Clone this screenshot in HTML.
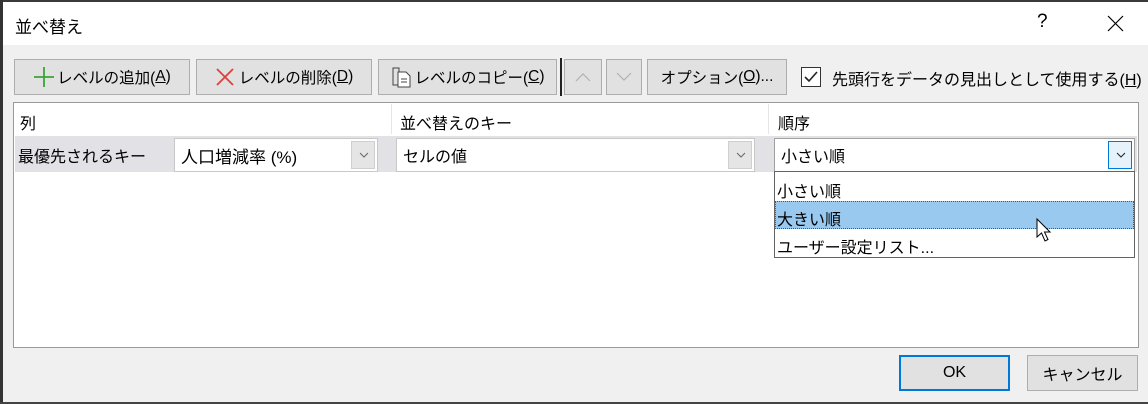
<!DOCTYPE html>
<html><head><meta charset="utf-8"><style>
*{margin:0;padding:0;box-sizing:border-box}
body{width:1148px;height:404px;overflow:hidden;background:#f0f0f0;position:relative;font-family:"Liberation Sans","Noto Sans CJK JP",sans-serif;font-size:15px;color:#000}
.a{position:absolute}
.btn{position:absolute;background:#e1e1e1;border:1px solid #adadad;display:flex;align-items:center;justify-content:center;white-space:nowrap;font-size:15.5px}
.cb{position:absolute;background:#fff;border:1px solid #c8c8c8;padding-left:6px;display:flex;align-items:center;font-size:16px}
.dd{position:absolute;top:2px;bottom:2px;right:2px;width:24px;background:#e5e5e5;border:1px solid #cfcfcf}
.dd svg{position:absolute;left:7px;top:10px}
u{text-decoration:underline}
</style></head><body>
<div class="a" style="left:0;top:0;width:1148px;height:2px;background:#3a3a3a"></div>
<div class="a" style="left:0;top:0;width:3px;height:404px;background:#333"></div>
<div class="a" style="left:0;top:402px;width:1148px;height:2px;background:#444"></div>
<div class="a" style="left:3px;top:2px;width:1145px;height:43px;background:#fff"></div>
<div class="a" style="left:15px;top:13px;font-size:17px">並べ替え</div>
<div class="a" style="left:1037px;top:11px;font-size:19px">?</div>
<svg class="a" style="left:1107px;top:15px" width="17" height="17"><path d="M1 1L16 16M16 1L1 16" stroke="#000" stroke-width="1.2"/></svg>

<div class="btn" style="left:14px;top:59px;width:176px;height:36px"><svg width="22" height="22" style="margin-right:2px"><path d="M11 1V21M1 11H21" stroke="#3aa53a" stroke-width="1.8"/></svg>レベルの追加(<u>A</u>)</div>
<div class="btn" style="left:196px;top:59px;width:176px;height:36px"><svg width="20" height="20" style="margin-right:4px"><path d="M2 2L18 18M18 2L2 18" stroke="#e0403a" stroke-width="1.8"/></svg>レベルの削除(<u>D</u>)</div>
<div class="btn" style="left:378px;top:59px;width:179px;height:36px"><svg width="22" height="22" style="margin-right:2px"><path d="M3 2H9V19H3Z" fill="none" stroke="#444"/><path d="M8 6H16L20 10V21H8Z" fill="#fff" stroke="#444"/><path d="M11 13H17M11 16H17" stroke="#444"/></svg>レベルのコピー(<u>C</u>)</div>
<div class="a" style="left:560px;top:58px;width:2px;height:38px;background:#222"></div>
<div class="btn" style="left:564px;top:59px;width:38px;height:36px"><svg width="16" height="10"><path d="M1 9L8 2L15 9" fill="none" stroke="#b0b0b0" stroke-width="1.2"/></svg></div>
<div class="btn" style="left:606px;top:59px;width:36px;height:36px"><svg width="16" height="10"><path d="M1 1L8 8L15 1" fill="none" stroke="#b0b0b0" stroke-width="1.2"/></svg></div>
<div class="btn" style="left:647px;top:59px;width:140px;height:36px">オプション(<u>O</u>)...</div>
<div class="a" style="left:801px;top:67px;width:20px;height:20px;background:#fff;border:1px solid #333"><svg width="18" height="18"><path d="M3 9L7 13L15 4" fill="none" stroke="#222" stroke-width="1.6"/></svg></div>
<div class="a" style="left:832px;top:66px;font-size:16px">先頭行をデータの見出しとして使用する(<u>H</u>)</div>

<div class="a" style="left:13px;top:102px;width:1126px;height:246px;background:#fff;border:1px solid #9a9a9a"></div>
<div class="a" style="left:391px;top:104px;width:1px;height:30px;background:#e6e6e6"></div>
<div class="a" style="left:768px;top:104px;width:1px;height:30px;background:#e6e6e6"></div>
<div class="a" style="left:20px;top:110px;font-size:16px">列</div>
<div class="a" style="left:400px;top:110px;font-size:16px">並べ替えのキー</div>
<div class="a" style="left:778px;top:110px;font-size:16px">順序</div>
<div class="a" style="left:15px;top:136px;width:1122px;height:36px;background:#e1e1e6"></div>
<div class="a" style="left:18px;top:143px;font-size:16px">最優先されるキー</div>
<div class="cb" style="left:174px;top:138px;width:204px;height:34px;font-size:17px">人口増減率 (%)<div class="dd"><svg width="10" height="6"><path d="M1 1L5 5L9 1" fill="none" stroke="#666"/></svg></div></div>
<div class="cb" style="left:396px;top:138px;width:359px;height:34px">セルの値<div class="dd"><svg width="10" height="6"><path d="M1 1L5 5L9 1" fill="none" stroke="#666"/></svg></div></div>
<div class="cb" style="left:774px;top:138px;width:361px;height:34px;border-color:#a0a0a0">小さい順<div class="dd" style="background:#e5f1fb;border-color:#0078d7"><svg width="10" height="6"><path d="M1 1L5 5L9 1" fill="none" stroke="#222"/></svg></div></div>
<div class="a" style="left:774px;top:171px;width:361px;height:87px;background:#fff;border:1px solid #646464"></div>
<div class="a" style="left:777px;top:178px;font-size:16px">小さい順</div>
<div class="a" style="left:775px;top:201px;width:359px;height:28px;background:#99c9ef;border:1px dotted #555"></div>
<div class="a" style="left:777px;top:206px;font-size:16px">大きい順</div>
<div class="a" style="left:777px;top:234px;font-size:16px">ユーザー設定リスト...</div>
<svg class="a" style="left:1036px;top:218px" width="20" height="28"><path d="M1 1V19L5.5 15L9 23L12 21.5L8.5 14H14Z" fill="#fff" stroke="#000" stroke-width="1"/></svg>

<div class="btn" style="left:899px;top:355px;width:111px;height:36px;border:2px solid #0078d7;font-size:16px">OK</div>
<div class="btn" style="left:1027px;top:355px;width:111px;height:36px;font-size:16px">キャンセル</div>
</body></html>
